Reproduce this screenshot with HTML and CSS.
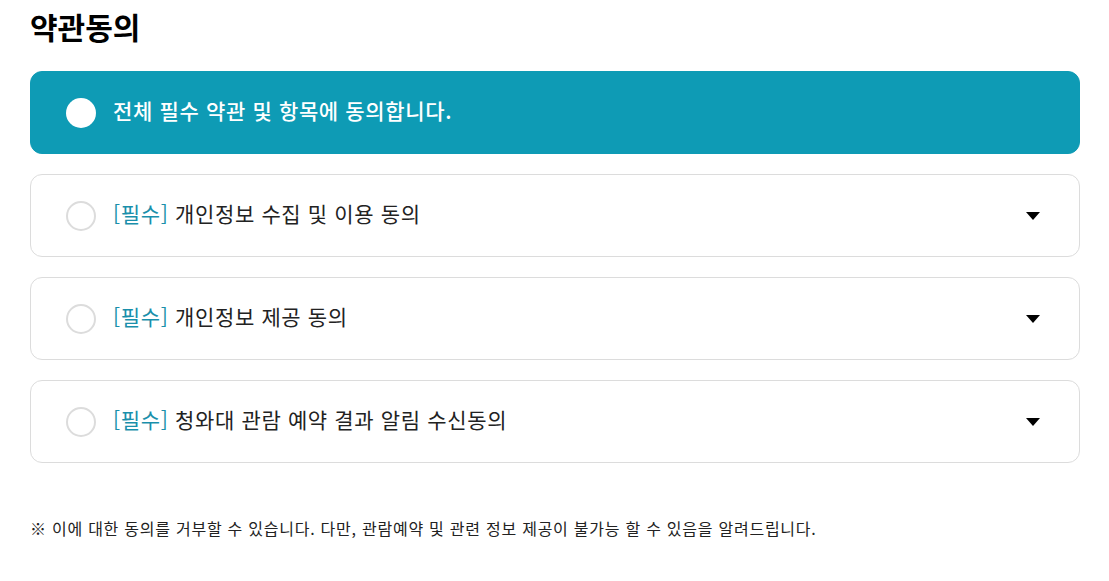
FILE: index.html
```html
<!DOCTYPE html>
<html lang="ko">
<head>
<meta charset="utf-8">
<title>약관동의</title>
<link rel="stylesheet" href="styles.css">
</head>
<body>
<main class="page">
  <h1 class="title">약관동의</h1>
  <div class="list">
    <div class="item item-all">
      <span class="check check-all"></span>
      <span class="label">전체 필수 약관 및 항목에 동의합니다.</span>
    </div>
    <div class="item">
      <span class="check"></span>
      <span class="label"><span class="req">[필수]</span> 개인정보 수집 및 이용 동의</span>
      <span class="caret"></span>
    </div>
    <div class="item">
      <span class="check"></span>
      <span class="label"><span class="req">[필수]</span> 개인정보 제공 동의</span>
      <span class="caret"></span>
    </div>
    <div class="item">
      <span class="check"></span>
      <span class="label"><span class="req">[필수]</span> 청와대 관람 예약 결과 알림 수신동의</span>
      <span class="caret"></span>
    </div>
  </div>
  <p class="note">※ 이에 대한 동의를 거부할 수 있습니다. 다만, 관람예약 및 관련 정보 제공이 불가능 할 수 있음을 알려드립니다.</p>
</main>
</body>
</html>
```
FILE: styles.css
```css
* { box-sizing: border-box; }
html, body { margin: 0; padding: 0; background: #fff; }
body {
  font-family: "Noto Sans CJK KR", "Noto Sans", sans-serif;
  color: #222;
}
.page {
  width: 1109px;
  padding: 0 30px 0 30px;
}
.title {
  margin: 0;
  padding-top: 5px;
  height: 71px;
  font-size: 30px;
  font-weight: 700;
  line-height: 42px;
  color: #000;
  letter-spacing: 0;
}
.list {
  display: flex;
  flex-direction: column;
  gap: 20px;
  width: 1050px;
}
.item {
  display: flex;
  align-items: center;
  height: 83px;
  padding: 0 39px 0 35px;
  border: 1px solid #dcdcdc;
  border-radius: 12px;
  background: #fff;
}
.item-all {
  background: #0e9bb5;
  border-color: #0e9bb5;
}
.check {
  flex: none;
  width: 30px;
  height: 30px;
  border-radius: 50%;
  border: 2px solid #dcdcdc;
  background: #fff;
  margin-right: 17px;
}
.check-all { border: none; }
.label {
  flex: 1;
  font-size: 21px;
  line-height: 28px;
  padding-bottom: 5px;
  color: #222;
  letter-spacing: 0.65px;
}
.item-all .label { color: #fff; font-weight: 500; }
.req { color: #1a8fab; }
.caret {
  flex: none;
  width: 0;
  height: 0;
  border-left: 7.5px solid transparent;
  border-right: 7.5px solid transparent;
  border-top: 8px solid #000;
}
.note {
  margin: 53px 0 0 0;
  font-size: 16px;
  line-height: 24px;
  color: #222;
  letter-spacing: 0.75px;
}
```
